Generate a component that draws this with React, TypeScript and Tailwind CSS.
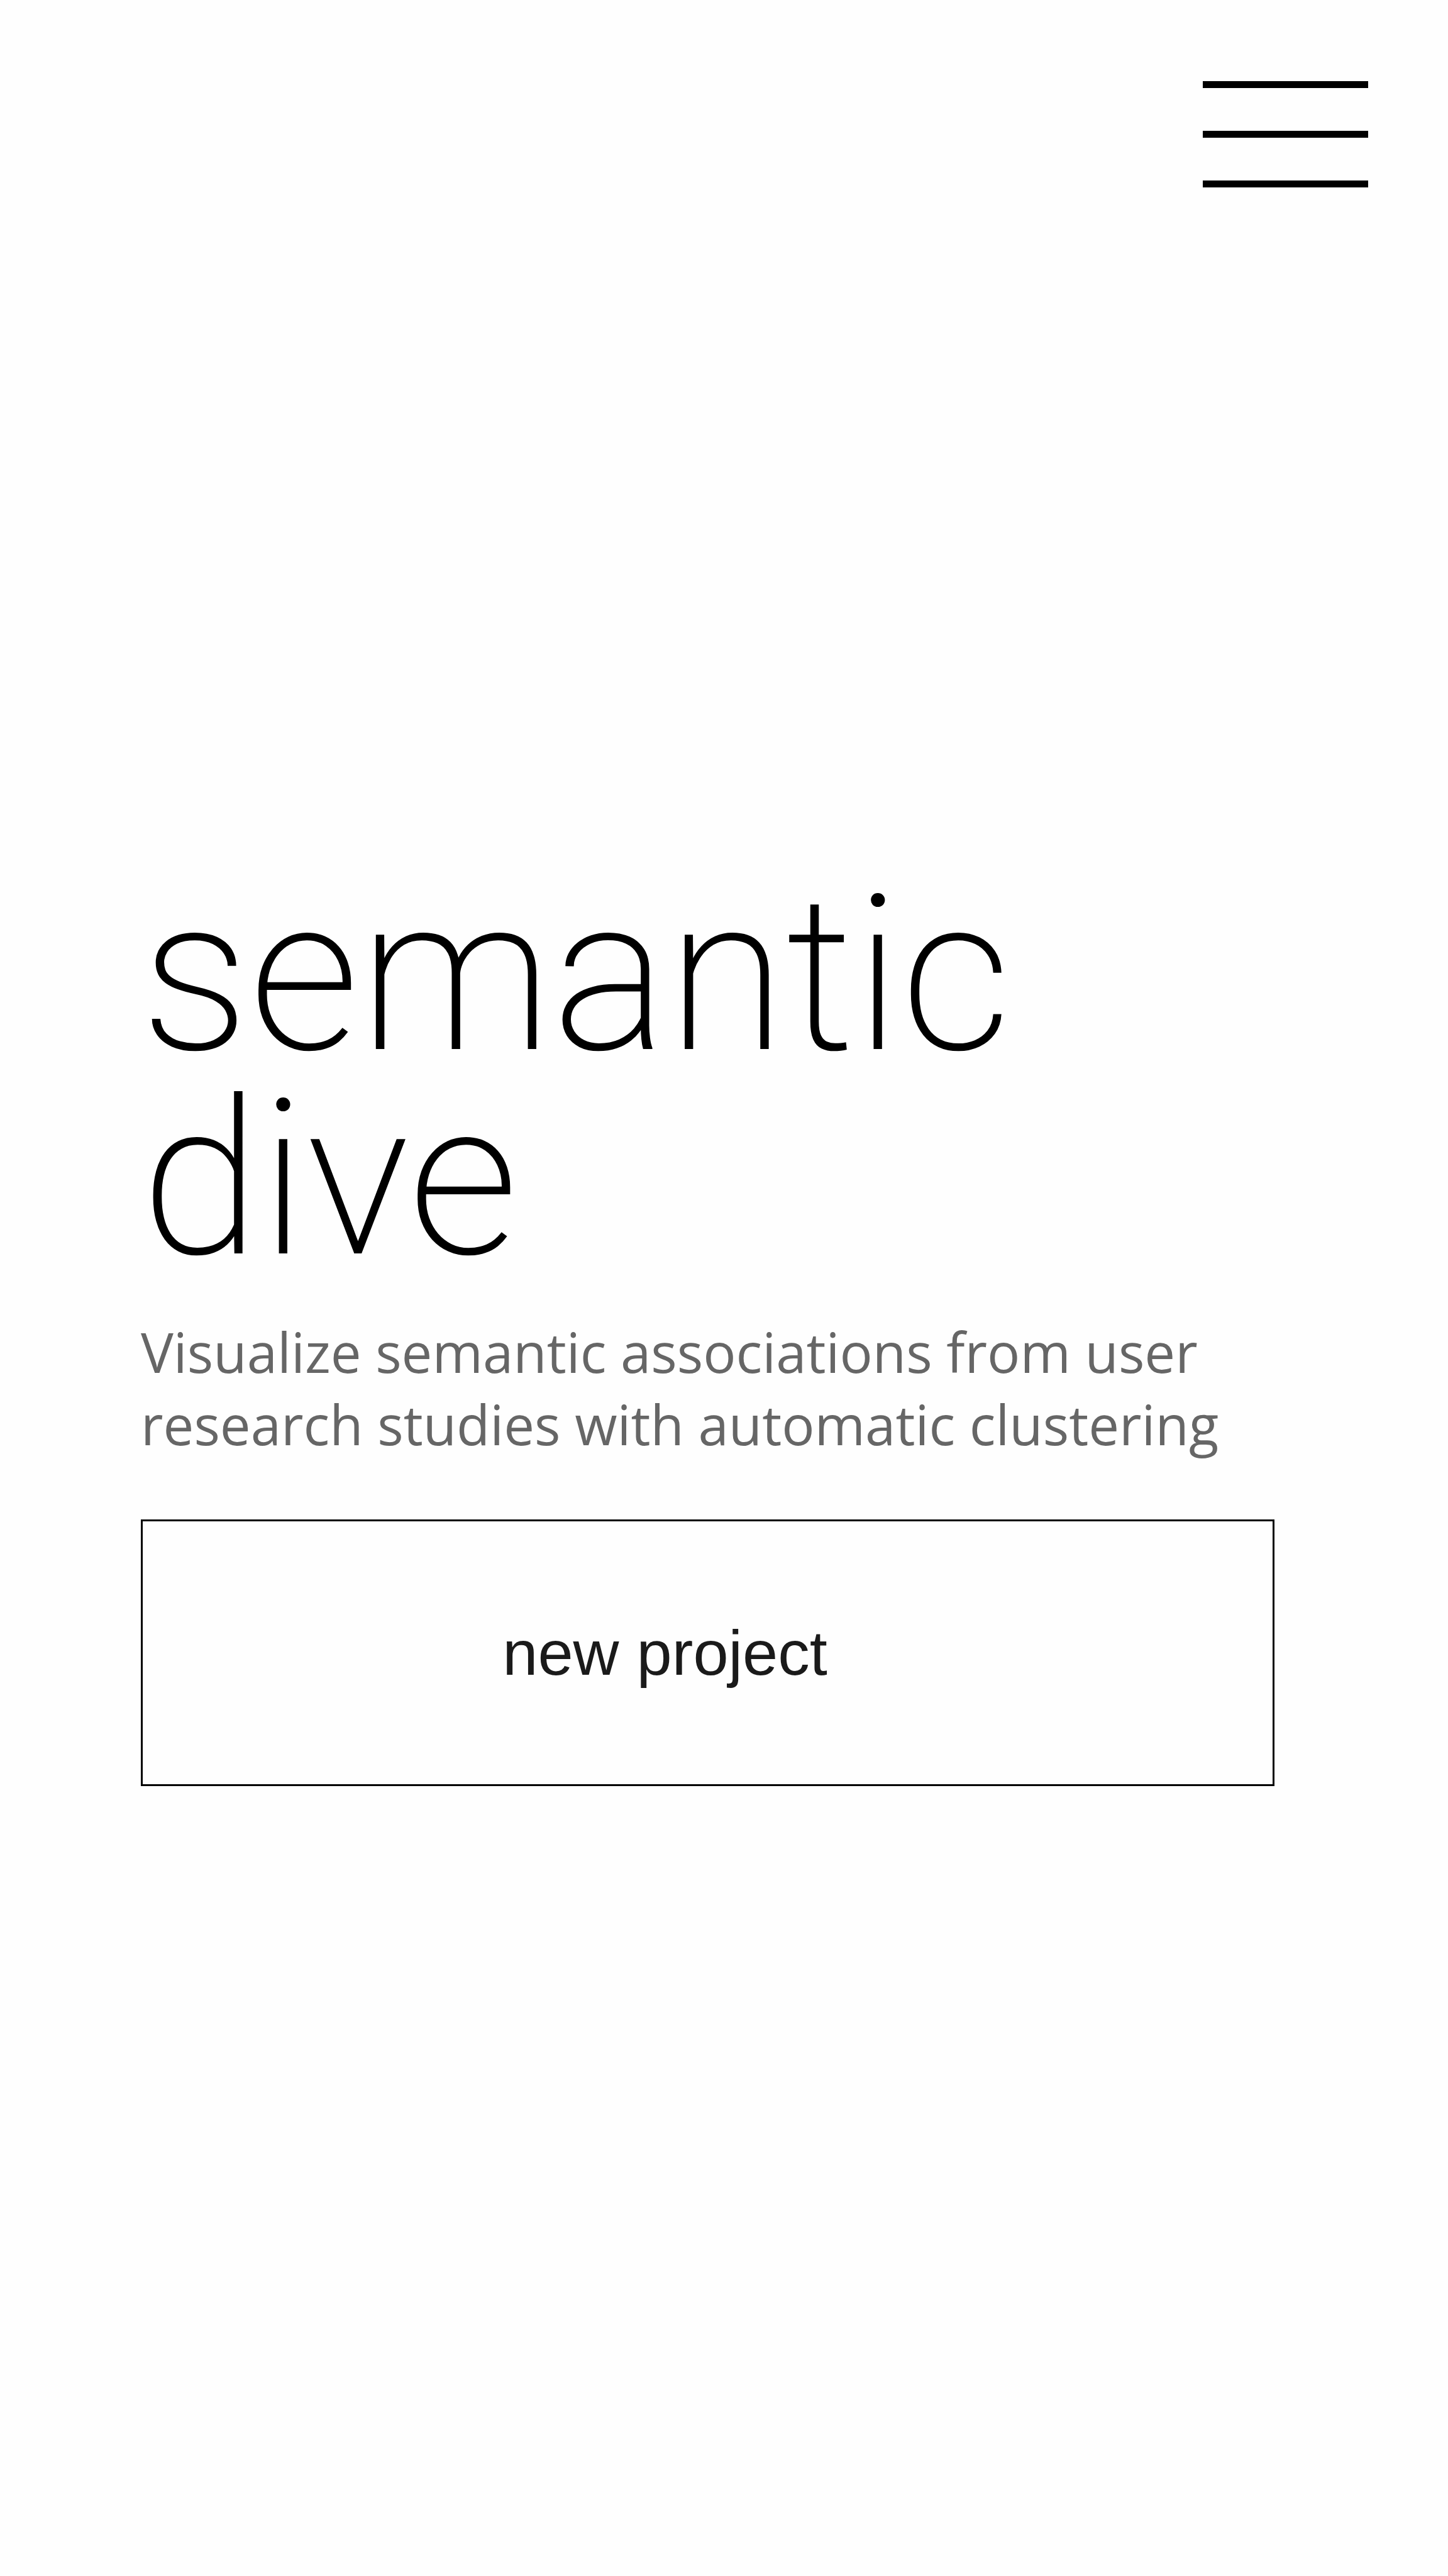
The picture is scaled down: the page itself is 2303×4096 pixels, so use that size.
export default function App() {
  return (
    <div className="min-h-screen bg-[#fefefe] pb-24">
      <header className="flex justify-end pt-[129px] pr-[127px]">
        <button type="button" aria-label="Open menu" className="flex w-[263px] flex-col gap-[68px]">
          <span className="h-[11px] w-full bg-black" />
          <span className="h-[11px] w-full bg-black" />
          <span className="h-[11px] w-full bg-black" />
        </button>
      </header>
      <main className="pt-[1090px] pr-[276px] pl-[224px]">
        <h1 className="font-['Roboto',sans-serif] text-[344px] leading-[325px] font-extralight text-black">
          semantic
          <br />
          dive
        </h1>
        <p className="mt-[54px] font-['Open_Sans',sans-serif] text-[87px] leading-[115px] text-[#666666]">
          Visualize semantic associations from user research studies with automatic clustering
        </p>
        <button
          type="button"
          className="mt-[94px] flex h-[424px] w-full items-center justify-center border-[3px] border-black pr-[136px] font-['Liberation_Sans',sans-serif] text-[101px] leading-[120px] text-[#1a1a1a]"
        >
          new project
        </button>
      </main>
    </div>
  );
}
